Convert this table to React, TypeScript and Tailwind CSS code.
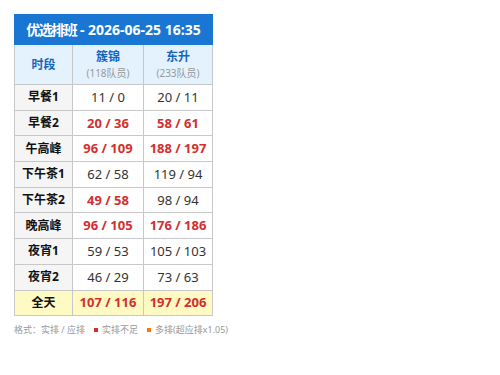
type Cell = { v: string; warn?: boolean };

interface Row {
  label: string;
  a: Cell;
  b: Cell;
}

const ROWS: Row[] = [
  { label: "早餐1", a: { v: "11 / 0" }, b: { v: "20 / 11" } },
  { label: "早餐2", a: { v: "20 / 36", warn: true }, b: { v: "58 / 61", warn: true } },
  { label: "午高峰", a: { v: "96 / 109", warn: true }, b: { v: "188 / 197", warn: true } },
  { label: "下午茶1", a: { v: "62 / 58" }, b: { v: "119 / 94" } },
  { label: "下午茶2", a: { v: "49 / 58", warn: true }, b: { v: "98 / 94" } },
  { label: "晚高峰", a: { v: "96 / 105", warn: true }, b: { v: "176 / 186", warn: true } },
  { label: "夜宵1", a: { v: "59 / 53" }, b: { v: "105 / 103" } },
  { label: "夜宵2", a: { v: "46 / 29" }, b: { v: "73 / 63" } },
];

const font = { fontFamily: '"Noto Sans", "Noto Sans CJK SC", sans-serif' };

function Val({ c }: { c: Cell }) {
  return (
    <td className={`border border-[#c8c8c8] text-center h-[25.7px] p-0 ${c.warn ? "text-[#d32f2f] font-bold" : "text-[#333]"}`}>
      {c.v}
    </td>
  );
}

export default function App() {
  return (
    <div className="p-[14px] bg-white min-h-[375px]" style={font}>
      <table className="border-collapse w-[198px] text-[13px] leading-none table-fixed">
        <colgroup>
          <col className="w-[58px]" />
          <col className="w-[71px]" />
          <col className="w-[69px]" />
        </colgroup>
        <thead>
          <tr>
            <th colSpan={3} className="bg-[#1976d2] text-white text-[14px] font-bold h-[30px] p-0 border border-[#1976d2]">
              <span className="tracking-[-1.5px]">优选排班</span> - 2026-06-25 16:35
            </th>
          </tr>
          <tr className="bg-[#e3f2fd]">
            <th className="border border-[#c8c8c8] text-[#1565c0] text-[12px] font-bold h-[40px] p-0">时段</th>
            <th className="border border-[#c8c8c8] text-[#1565c0] text-[12px] font-bold p-0">
              <div>簇锦</div>
              <div className="text-[10px] text-[#999] font-normal mt-[5px]">(118队员)</div>
            </th>
            <th className="border border-[#c8c8c8] text-[#1565c0] text-[12px] font-bold p-0">
              <div>东升</div>
              <div className="text-[10px] text-[#999] font-normal mt-[5px]">(233队员)</div>
            </th>
          </tr>
        </thead>
        <tbody>
          {ROWS.map((r) => (
            <tr key={r.label}>
              <td className="border border-[#c8c8c8] bg-[#f5f5f5] text-center text-[12px] font-bold text-[#111] h-[25.7px] p-0">{r.label}</td>
              <Val c={r.a} />
              <Val c={r.b} />
            </tr>
          ))}
          <tr className="bg-[#fff9c4]">
            <td className="border border-[#c8c8c8] text-center text-[12px] font-bold text-[#111] h-[25.7px] p-0">全天</td>
            <td className="border border-[#c8c8c8] text-center font-bold text-[#d32f2f] p-0">107 / 116</td>
            <td className="border border-[#c8c8c8] text-center font-bold text-[#d32f2f] p-0">197 / 206</td>
          </tr>
        </tbody>
      </table>
      <div className="flex items-center mt-[7px] text-[9px] text-[#999]">
        <span>格式：实排 / 应排</span>
        <span className="inline-block w-[4px] h-[4px] bg-[#d32f2f] ml-[9px] mr-[4px]" />
        <span>实排不足</span>
        <span className="inline-block w-[4px] h-[4px] bg-[#f57c00] ml-[9px] mr-[4px]" />
        <span>多排(超应排x1.05)</span>
      </div>
    </div>
  );
}
